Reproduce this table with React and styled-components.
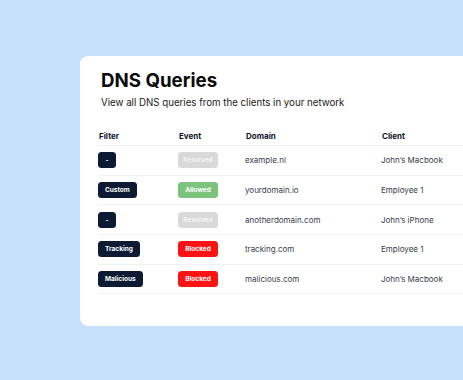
import React from "react";
import styled, { createGlobalStyle } from "styled-components";

const Global = createGlobalStyle`
  html, body { margin: 0; padding: 0; }
  body {
    background: #c6e0fb;
    font-family: Inter, "Noto Sans", sans-serif;
    overflow: hidden;
    width: 463px;
    height: 380px;
  }
`;

const Page = styled.div`
  padding: 56px 0 0 80px;
  height: 380px;
  box-sizing: border-box;
`;

const Card = styled.div`
  width: 420px;
  height: 270px;
  background: #ffffff;
  border-radius: 8px;
  padding: 14px 0 0 18px;
  box-sizing: border-box;
`;

const Header = styled.div`
  padding-left: 3px;
  display: flex;
  flex-direction: column;
  gap: 4px;
`;

const Title = styled.h1`
  margin: 0;
  font-size: 18.7px;
  line-height: 22px;
  font-weight: 700;
  color: #0a0a0a;
`;

const Subtitle = styled.p`
  margin: 0;
  font-size: 9.7px;
  line-height: 14px;
  color: #1a1a1a;
`;

const Table = styled.div`
  margin-top: 16px;
  display: flex;
  flex-direction: column;
`;

const Row = styled.div`
  display: grid;
  grid-template-columns: 80px 67px 136px 1fr;
  align-items: center;
  height: ${(p) => (p.$head ? "20px" : "29.7px")};
  border-bottom: 1px solid #f0f1f3;
  box-sizing: border-box;
`;

const HeadCell = styled.div`
  font-size: 8px;
  line-height: 10px;
  font-weight: 700;
  color: #0b1528;
  padding-left: 1px;
`;

const Cell = styled.div`
  font-size: 8px;
  line-height: 10px;
  color: #353d4b;
`;

const BadgeCell = styled.div`
  display: flex;
  align-items: center;
`;

const tones = {
  filter: { bg: "#0c1a33", fg: "#ffffff" },
  resolved: { bg: "#d9d9d9", fg: "#f4f4f4" },
  allowed: { bg: "#7cc47e", fg: "#ffffff" },
  blocked: { bg: "#fe1314", fg: "#ffffff" },
};

const Badge = styled.span`
  display: inline-flex;
  align-items: center;
  justify-content: center;
  height: 16px;
  min-width: ${(p) => (p.$wide ? "40px" : "18px")};
  padding: 0 ${(p) => (p.$wide ? "0" : "7px")};
  box-sizing: border-box;
  border-radius: 3.5px;
  background: ${(p) => tones[p.$tone].bg};
  color: ${(p) => tones[p.$tone].fg};
  font-size: 6.5px;
  line-height: 8px;
  font-weight: 700;
  white-space: nowrap;
`;

const rows = [
  { filter: "-", event: "Resolved", tone: "resolved", domain: "example.nl", client: "John’s Macbook" },
  { filter: "Custom", event: "Allowed", tone: "allowed", domain: "yourdomain.io", client: "Employee 1" },
  { filter: "-", event: "Resolved", tone: "resolved", domain: "anotherdomain.com", client: "John’s iPhone" },
  { filter: "Tracking", event: "Blocked", tone: "blocked", domain: "tracking.com", client: "Employee 1" },
  { filter: "Malicious", event: "Blocked", tone: "blocked", domain: "malicious.com", client: "John’s Macbook" },
];

export default function App() {
  return (
    <>
      <Global />
      <Page>
        <Card>
          <Header>
            <Title>DNS Queries</Title>
            <Subtitle>View all DNS queries from the clients in your network</Subtitle>
          </Header>
          <Table>
            <Row $head>
              <HeadCell>Filter</HeadCell>
              <HeadCell>Event</HeadCell>
              <HeadCell>Domain</HeadCell>
              <HeadCell>Client</HeadCell>
            </Row>
            {rows.map((r, i) => (
              <Row key={i}>
                <BadgeCell>
                  <Badge $tone="filter">{r.filter}</Badge>
                </BadgeCell>
                <BadgeCell>
                  <Badge $tone={r.tone} $wide>{r.event}</Badge>
                </BadgeCell>
                <Cell>{r.domain}</Cell>
                <Cell>{r.client}</Cell>
              </Row>
            ))}
          </Table>
        </Card>
      </Page>
    </>
  );
}
